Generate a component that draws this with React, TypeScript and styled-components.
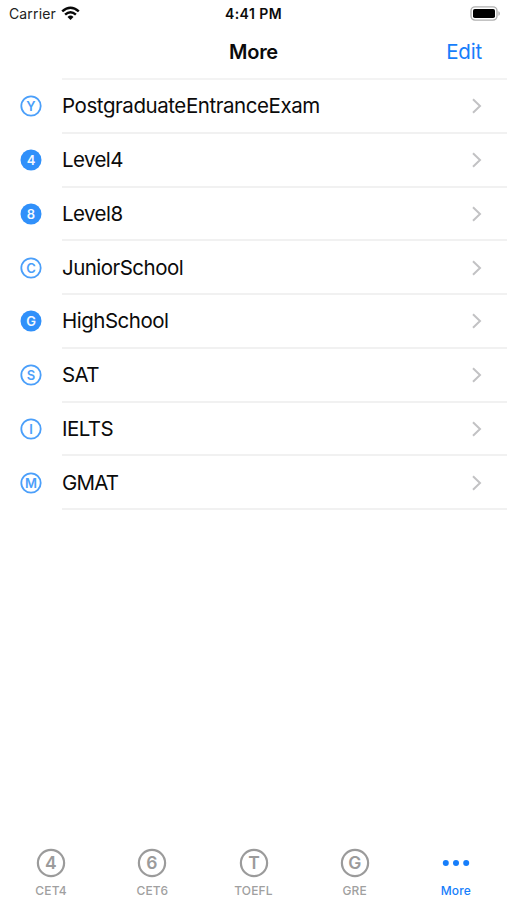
import React from 'react';
import styled, { createGlobalStyle } from 'styled-components';

const GlobalStyle = createGlobalStyle`
  * { box-sizing: border-box; }
  body {
    margin: 0;
    background: #fff;
    color: #0b0b0b;
    font-family: Inter, Roboto, "Liberation Sans", sans-serif;
    overflow: hidden;
  }
`;

const Screen = styled.div`
  display: flex;
  flex-direction: column;
  width: 507px;
  height: 900px;
  background: #fff;
`;

const StatusBar = styled.header`
  display: grid;
  grid-template-columns: 1fr auto 1fr;
  align-items: center;
  height: 27px;
  padding: 0 9px;
`;

const Carrier = styled.div`
  display: flex;
  align-items: center;
  gap: 5px;
  font-size: 14px;
  line-height: 20px;
  letter-spacing: 0.14px;
  color: #222;
`;

const Clock = styled.div`
  font-size: 14px;
  line-height: 20px;
  font-weight: 600;
  letter-spacing: 0.45px;
`;

const Battery = styled.svg`
  justify-self: end;
  margin-right: -3px;
`;

const NavBar = styled.nav`
  display: grid;
  grid-template-columns: 1fr auto 1fr;
  align-items: center;
  height: 51px;
  padding: 0 25px 1px;
`;

const Title = styled.h1`
  grid-column: 2;
  margin: 0;
  font-size: 20px;
  line-height: 28px;
  font-weight: 600;
  letter-spacing: -0.3px;
`;

const EditButton = styled.button`
  justify-self: end;
  padding: 0;
  border: 0;
  background: none;
  font: inherit;
  font-size: 20.5px;
  line-height: 28px;
  letter-spacing: -0.2px;
  color: #167efb;
`;

const List = styled.ul`
  flex: 1;
  margin: 0;
  padding: 0;
  list-style: none;
`;

const Divider = styled.div`
  height: 2px;
  margin-left: 62px;
  background: #f3f3f3;
`;

const Row = styled.li`
  display: grid;
  grid-template-columns: 62px 1fr;
  height: 53.75px;
`;

const RowIcon = styled.span`
  display: flex;
  align-items: center;
  padding: 0 0 1px 20px;
`;

const RowBody = styled.div`
  display: flex;
  align-items: center;
  justify-content: space-between;
  padding: 1px 25px 0 0;
  border-bottom: 2px solid #f1f1f1;
`;

const RowLabel = styled.span<{ $spacing: number }>`
  font-size: 20.5px;
  line-height: 28px;
  letter-spacing: ${p => p.$spacing}px;
`;

const TabBar = styled.footer`
  display: grid;
  grid-template-columns: repeat(5, 101.2px);
  justify-content: center;
  height: 54px;
`;

const Tab = styled.button<{ $active?: boolean }>`
  display: flex;
  flex-direction: column;
  align-items: center;
  gap: 5px;
  padding: 2px 0 0;
  border: 0;
  background: none;
  font: inherit;
  font-size: 12px;
  line-height: 16px;
  font-weight: 500;
  letter-spacing: 0.15px;
  color: ${p => (p.$active ? '#167efb' : '#a0a0a0')};
`;

const Glyph = styled.text`
  font-family: Inter, "Liberation Sans", sans-serif;
  text-anchor: middle;
`;

function RowBadge({ mark, filled }: { mark: string; filled?: boolean }) {
  return (
    <svg width="22" height="22" viewBox="0 0 22 22">
      <circle cx="11" cy="11" r={filled ? 10.5 : 9.7} fill={filled ? '#3090fa' : 'none'} stroke={filled ? 'none' : '#4b9ffa'} strokeWidth="1.8" />
      <Glyph x="11" y="15.7" fontSize="13" fontWeight={600} fill={filled ? '#f4f9ff' : '#4b9ffa'}>{mark}</Glyph>
    </svg>
  );
}

function TabBadge({ mark }: { mark: string }) {
  return (
    <svg width="30" height="30" viewBox="0 0 30 30">
      <circle cx="15" cy="15" r="13.1" fill="none" stroke="#9b9b9b" strokeWidth="2.2" />
      <Glyph x="15" y="21.3" fontSize="17.5" fontWeight={600} fill="#9b9b9b">{mark}</Glyph>
    </svg>
  );
}

const rows = [
  { mark: 'Y', label: 'PostgraduateEntranceExam', spacing: -0.43 },
  { mark: '4', label: 'Level4', filled: true, spacing: -0.6 },
  { mark: '8', label: 'Level8', filled: true, spacing: -0.55 },
  { mark: 'C', label: 'JuniorSchool', spacing: -0.53 },
  { mark: 'G', label: 'HighSchool', filled: true, spacing: -0.5 },
  { mark: 'S', label: 'SAT', spacing: -0.7 },
  { mark: 'I', label: 'IELTS', spacing: -0.55 },
  { mark: 'M', label: 'GMAT', spacing: -0.8 },
];

const tabs = [
  { mark: '4', label: 'CET4' },
  { mark: '6', label: 'CET6' },
  { mark: 'T', label: 'TOEFL' },
  { mark: 'G', label: 'GRE' },
];

export default function App() {
  return (
    <Screen>
      <GlobalStyle />
      <StatusBar>
        <Carrier>
          Carrier
          <svg width="19" height="15" viewBox="0 0 19 15" fill="none" stroke="#080808" strokeWidth="2.5">
            <path d="M1.2 5.4Q9.5 -2 17.8 5.4" />
            <path d="M4.1 8.6Q9.5 3.8 14.9 8.6" />
            <path d="M6.5 10.9Q9.5 8.2 12.5 10.9L9.5 14Z" fill="#080808" stroke="none" />
          </svg>
        </Carrier>
        <Clock>4:41 PM</Clock>
        <Battery width="31" height="15" viewBox="0 0 31 15">
          <rect x="1" y="0.9" width="26" height="13.2" rx="4" fill="#fff" stroke="#b0b0b0" strokeWidth="1.4" />
          <rect x="3" y="3" width="22" height="9" rx="1.8" fill="#000" />
          <path d="M28.4 5.2C30.4 5.8 30.4 9.2 28.4 9.8Z" fill="#b0b0b0" />
        </Battery>
      </StatusBar>
      <NavBar>
        <Title>More</Title>
        <EditButton>Edit</EditButton>
      </NavBar>
      <Divider />
      <List>
        {rows.map(row => (
          <Row key={row.label}>
            <RowIcon><RowBadge mark={row.mark} filled={row.filled} /></RowIcon>
            <RowBody>
              <RowLabel $spacing={row.spacing}>{row.label}</RowLabel>
              <svg width="11" height="18" viewBox="0 0 11 18" fill="none" stroke="#c2c2c4" strokeWidth="2">
                <path d="M2 2.2L9 9L2 15.8" />
              </svg>
            </RowBody>
          </Row>
        ))}
      </List>
      <TabBar>
        {tabs.map(tab => (
          <Tab key={tab.label}>
            <TabBadge mark={tab.mark} />
            {tab.label}
          </Tab>
        ))}
        <Tab $active>
          <svg width="30" height="30" viewBox="0 0 30 30" fill="#167efb">
            <circle cx="4.8" cy="15" r="3" />
            <circle cx="15" cy="15" r="3" />
            <circle cx="25.2" cy="15" r="3" />
          </svg>
          More
        </Tab>
      </TabBar>
    </Screen>
  );
}
